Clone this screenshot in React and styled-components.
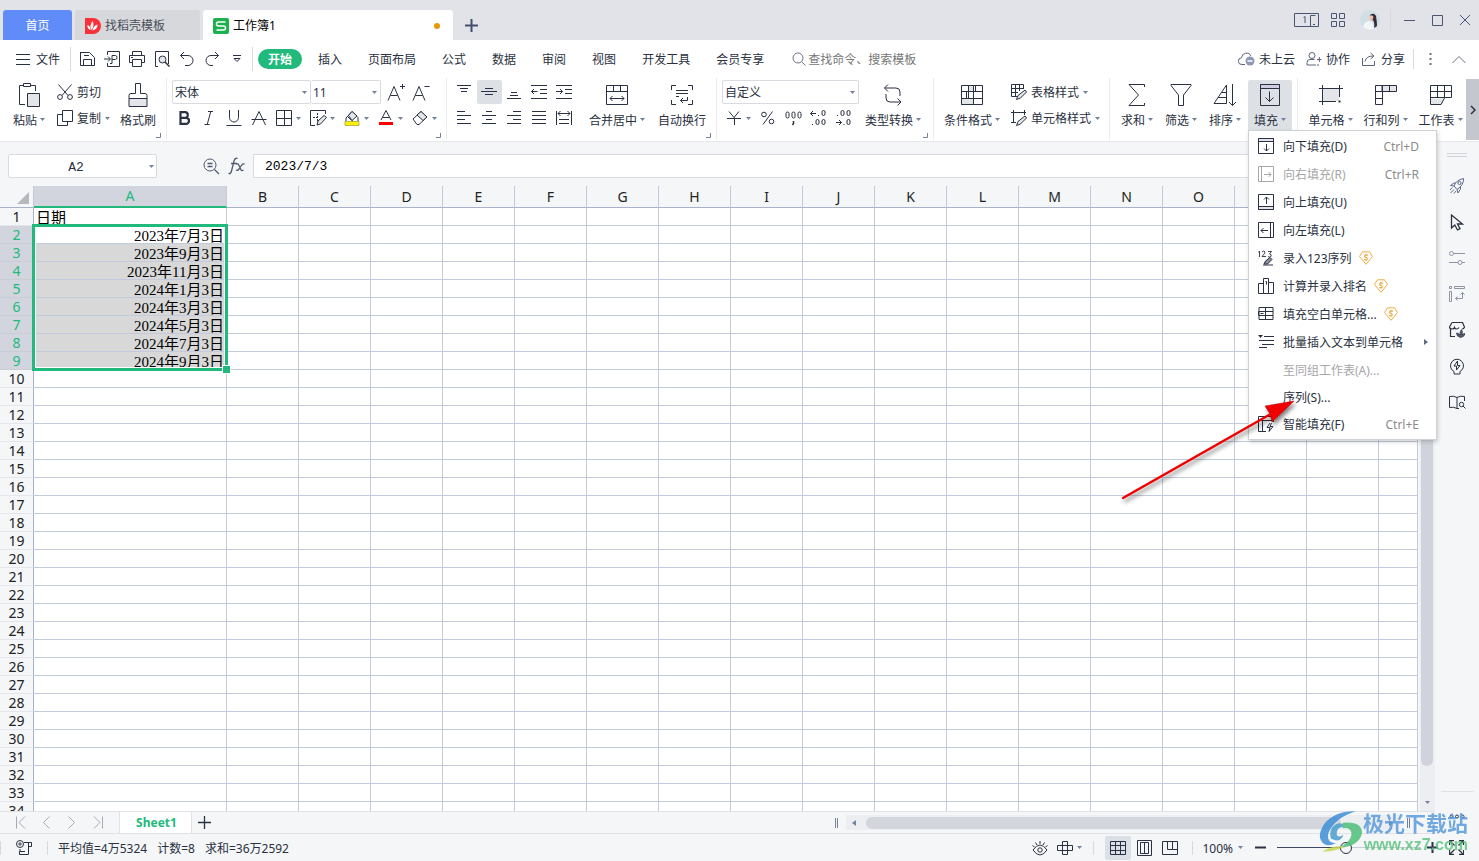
import React from 'react';
import styled, { createGlobalStyle, css } from 'styled-components';

const UI = '"Noto Sans", "Noto Sans CJK SC", sans-serif';
const CELL = '"Liberation Serif", "Noto Sans CJK SC", serif';
const INK = '#2a3142';
const GREEN = '#21b97c';
const LINE = '#c3cadb';
const PANEL = '#f5f6f8';

const Global = createGlobalStyle`
  * { box-sizing: border-box; }
  body { margin: 0; font-family: ${UI}; font-size: 12px; line-height: 16px; color: ${INK}; overflow: hidden; }
  button, input, select { font: inherit; color: inherit; margin: 0; padding: 0; border: 0; background: none; outline: none; }
  svg { display: block; flex: none; }
`;

/* ---------- icons: [width, height, drawing] ---------- */
const F = '#e3e5e9';
const icons = {
  menu: [14, 12, <path d="M0 1.500h14M0 6.500h14M0 11.500h14" />],
  save: [16, 16, <><path d="M1 1.500h9.500l5 5V14.500H1.500V1.500" /><path d="M5 4.500h5M4.500 14.500v-6h8v6" /></>],
  exportPdf: [16, 16, <><path d="M3.500 4V.500h12v15h-12V12M0 8h6M4 5.500L6.500 8 4 10.500M8 12.500V4.500h3.500q1.500 0 1.500 2t-1.500 2H8M6 12.500h2" /></>],
  print: [16, 16, <><path d="M3.500 4.500v-4h9v4M3.500 11.500h-3v-7h15v7h-3" /><path d="M3.500 8.500h9v7h-9z" /><path d="M2 6.500h2" /></>],
  preview: [16, 16, <><path d="M4 15.500H1.500V.500h13V13" /><circle cx="8.500" cy="8.500" r="3.500" fill={F} /><path d="M11 11l4.500 4.500" strokeWidth="1.500" /></>],
  undo: [16, 16, <><path d="M5 1L1.500 4.500 5 8M1.500 4.500H9a5 5 0 0 1 0 10H6" /></>],
  redo: [16, 16, <><path d="M11 1l3.500 3.500L11 8M14.500 4.500H7a5 5 0 0 0 0 10h2" /></>],
  more: [8, 8, <><path d="M0 .500h8M1 3.500L4 6.500l3-3z" /></>],
  search: [14, 14, <><circle cx="6" cy="6" r="5" /><path d="M9.500 9.500l4 4" /></>],
  cloud: [17, 16, <><path d="M7 13.500H4a3.300 3.300 0 0 1-.5-6.700A5 5 0 0 1 13 5" /><circle cx="12" cy="10" r="4.500" fill="#8d99b3" stroke="none" /><path d="M9.500 10h5" stroke="#fff" strokeWidth="1.500" /></>],
  person: [16, 14, <><circle cx="6" cy="3.500" r="3" /><path d="M8.500 7.500H4a3 3 0 0 0-3 3v2.500h9M11 7.500h4.500M13.300 5v5M11 13h2" /></>],
  share: [16, 14, <><path d="M1.500 6v7.500h12V9M4 9.500q1-5.500 8-5.500M9.500 1L13 4 9.500 7" /></>],
  dots: [3, 14, <path d="M1.500 1v2M1.500 6v2M1.500 11v2" strokeWidth="2" />],
  up: [16, 9, <path d="M1.500 8L8 1.500 14.500 8" />],
  plus: [13, 13, <path d="M6.500 0v13M0 6.500h13" strokeWidth="2" />],
  plusThin: [13, 13, <path d="M6.500 0v13M0 6.500h13" strokeWidth="1.300" />],
  deskOne: [25, 14, <><path d="M.500.500h24v13H.500z M16.500 13.500V2.500h5M19 11.500h2" /><path d="M9.500 4.500L11 3.500v6.500" /></>],
  apps: [14, 14, <path d="M.500.500h5v5h-5zM8.500.500h5v5h-5zM.500 8.500h5v5h-5zM8.500 8.500h5v5h-5z" />],
  min: [11, 11, <path d="M0 5.500h11" />],
  max: [11, 11, <path d="M.500.500h10v10H.500z" />],
  close: [12, 12, <path d="M1 1l10 10M11 1L1 11" />],
  paste: [24, 24, <><path d="M8 21.500H2.500v-19H6M14 2.500h4.500V8" /><path d="M6.500.500h7v3h-7z" /><path d="M10.500 10.500h12v13h-12z" fill={F} /></>],
  cut: [16, 16, <><path d="M1.500.500l9.500 11M14.500.500L5 11.500" /><circle cx="3" cy="13" r="2.400" /><circle cx="13" cy="13" r="2.400" /></>],
  copy: [16, 16, <><path d="M5.500.500h10v11h-10z" /><path d="M5.500 4.500H.500v11h10v-4" /></>],
  brush: [20, 24, <><path d="M1 15.500h18v8H1z" fill={F} /><path d="M1 15.500V12.500q0-2 2-2h4.500V.500h5v10H17q2 0 2 2v3" /></>],
  growA: [18, 18, <><path d="M1 17.500L7 3.500l6 14M3.500 12.500h7M13 3.500h5M15.500 1v5" /></>],
  shrinkA: [18, 18, <><path d="M1 17.500L7 3.500l6 14M3.500 12.500h7M12.500 3.500h5" /></>],
  bold: [12, 14, <path d="M2.500 1.200H7a2.800 2.800 0 0 1 0 5.600H2.500zM2.500 6.800H8a3 3 0 0 1 0 6H2.500z" strokeWidth="2.200" />],
  italic: [10, 14, <path d="M4 .500h5M.500 13.500h5M6.800.500l-3.600 13" />],
  underline: [16, 16, <path d="M3.500 0v7.500a4.500 4.500 0 0 0 9 0V0M.500 15.500h15" />],
  strike: [16, 14, <path d="M1.500 14L8 .500 14.500 14M.500 8.500h15" />],
  border: [16, 16, <path d="M.500.500h15v15H.500zM8.500.500v15M.500 8.500h15" />],
  borderDraw: [17, 16, <><path d="M5 15.500H.500V.500h15V4" /><path d="M7.500 3v8M3 7.500h6" strokeDasharray="2 1" /><path d="M7 15l1-4 6-5.500 2.500 2L10.500 14z" fill={F} /></>],
  fillColor: [16, 16, <><path d="M2 11V8L8 1.500 14 7.500V11M4 7l5 4.500" /><path d="M4.500 5.500L8 1.500l5 4.500-5 4.500z" fill={F} /><path d="M1 11.500h14v4H1z" fill="#fff200" stroke="#8a8a30" strokeWidth=".6" /></>],
  fontColor: [14, 16, <><path d="M2 10L7 .500 12 10M4 7.500h6" /><path d="M0 13.500h14" stroke="#f00" strokeWidth="3" /></>],
  eraser: [16, 16, <><path d="M1 9L9 1.500l6 5.500-8 7.500H5z" /><path d="M5 5l6 5.500 4-3.500L9 1.500z" fill={F} /></>],
  vTop: [16, 16, <path d="M1 1.500h14M4 4.500h8M5 7.500h6" />],
  vMid: [16, 16, <path d="M4 4.500h8M0 7.500h16M4 10.500h8" />],
  vBot: [16, 16, <path d="M5 8.500h6M4 11.500h8M1 14.500h14" />],
  indentL: [16, 14, <path d="M0 .500h16M9 4.500h7M9 8.500h7M0 13.500h16M0 6.500h6.500M3 4L.500 6.500 3 9" />],
  indentR: [16, 14, <path d="M0 .500h16M9 4.500h7M9 8.500h7M0 13.500h16M0 6.500h6.500M4 4l2.500 2.500L4 9" />],
  hLeft: [14, 14, <path d="M0 .500h8M0 4.500h14M0 8.500h8M0 12.500h14" />],
  hCenter: [14, 14, <path d="M4 .500h6M0 4.500h14M4 8.500h6M0 12.500h14" />],
  hRight: [14, 14, <path d="M6 .500h8M0 4.500h14M6 8.500h8M0 12.500h14" />],
  justify: [14, 14, <path d="M0 .500h14M0 4.500h14M0 8.500h14M0 12.500h14" />],
  distribute: [16, 14, <path d="M.500 0v14M15.500 0v14M3 8.500h10M3 12.500h10M2 2.500h12M4.500 0L2 2.500 4.500 5M11.500 0L14 2.500 11.500 5" />],
  merge: [22, 20, <><path d="M.500.500h21v19H.500zM.500 6.500h21M7.500.500v6M14.500.500v6M4 13.500h14M6.500 11L4 13.500l2.500 2.500M15.500 11l2.500 2.500-2.500 2.500" /></>],
  wrap: [22, 20, <><path d="M.500 5V.500H5M17 .500h4.500V5M.500 15v4.500H5M17 19.500h4.500V15M5 5.500h12M5 8.500h12M5 11.500h3M16.500 12v3.500h-7M12 13l-2.500 2.500L12 18" /></>],
  yen: [14, 14, <path d="M2 .500l5 6 5-6M0 7.500h14M7.500 6.500V14" />],
  percent: [14, 14, <><circle cx="3" cy="3.500" r="2.300" /><circle cx="10.500" cy="10.500" r="2.300" /><path d="M11.500.500L2 13.500" /></>],
  thousand: [17, 15, <><rect x="1" y="1" width="3" height="6" rx="1.500" /><rect x="7" y="1" width="3" height="6" rx="1.500" /><rect x="13" y="1" width="3" height="6" rx="1.500" /><path d="M8.500 10v2.500l-1 1.500" strokeWidth="1.500" /></>],
  decInc: [17, 16, <><path d="M.500 3.500H6M3 1L.500 3.500 3 6M8 5.500h1" /><rect x="12" y=".5" width="3" height="5" rx="1.500" /><rect x="6" y="9.500" width="3" height="5" rx="1.500" /><rect x="12" y="9.500" width="3" height="5" rx="1.500" /><path d="M2 14.500h1" /></>],
  decDec: [17, 16, <><path d="M2 5.500h1M1 12.500h5.500M4 10l2.500 2.500L4 15M8.500 14.500h1" /><rect x="6" y=".5" width="3" height="5" rx="1.500" /><rect x="12" y=".5" width="3" height="5" rx="1.500" /><rect x="12" y="9.500" width="3" height="5" rx="1.500" /></>],
  convert: [20, 22, <><path d="M5 .500L1.500 4 5 7.500M1.500 4H13q4 0 4 4v4M14.500 14.500L18 18l-3.500 3.500M18 18H7q-4 0-4-4v-4" /></>],
  condFmt: [22, 20, <><path d="M.500.500h21v19H.500z" /><path d="M7.500.500h5v6h-5zM.500 13.500h12v6H.500z" fill={F} /><path d="M.500 6.500h21M.500 13.500h21M7.500 6.500v7M5.500 6.500v7M12.500 6.500v13M14.500.500v6" /></>],
  tableStyle: [16, 16, <><path d="M6 12.500H.500v-12h12V5M.500 4.500h12M.500 8.500H7M4.500.500v12M8.500.500V7" /><path d="M5.500 15.500l1.500-4 7-5.500 1.500 2-6 6z" fill={F} /></>],
  cellStyle: [16, 16, <><path d="M2.500 0v13M0 2.500h15M13.500 0v5M0 12.500h5" /><path d="M5.500 15.500l1.500-4 7-5.500 1.500 2-6 6z" fill={F} /></>],
  sum: [20, 22, <path d="M17.500 3V.500H2L11.500 11 2 21.500h15.500V19" />],
  filter: [22, 22, <path d="M1 .500h20v1L13.500 11v10.500h-5V11L1 1.500z" />],
  sort: [24, 24, <path d="M1 20.500L13.500 2v18.500H1zM9 9.500h4.500M5 14.500h8.500M19.500 1v21.500M16 19l3.500 3.500L23 19" />],
  fill: [20, 22, <><path d="M.500.500h19v21H.500z" /><path d="M.500.500h19v4H.500z" fill="#d0cde0" /><path d="M9.500 7.500v10M5.500 13.500l4 4 4-4" /></>],
  cell: [24, 20, <><path d="M3 4h17v12H3z" fill={F} stroke="none" /><path d="M3.500 0v20M20.500 0v12M0 3.500h24M0 16.500h17" /><path d="M19.500 16.500h2" strokeWidth="2" /></>],
  rowcol: [22, 20, <><path d="M7 .500h14.500v6H7z" fill={F} /><path d="M.500.500h7v19h-7z" /><path d="M14.500.500v6M.500 6.500h7M.500 13.500h7" /></>],
  sheet: [22, 20, <><path d="M.500 13.500h14l-2 6H.500z" fill={F} stroke="none" /><path d="M.500 19.500V.500h21v12H.500M.500 6.500h21M7.500.500v12M14.500.500v12M.500 19.500H11l3.500-6.500" /></>],
  chevR: [6, 10, <path d="M1 1l4 4-4 4" strokeWidth="1.500" />],
  zoomOut: [17, 17, <><circle cx="7" cy="7" r="6" /><path d="M4.500 5.500h5M4.500 8.500h5M11.500 11.500l4.500 4.500" strokeWidth="1.300" /></>],
  fillDown: [16, 16, <><path d="M.500.500h15v3H.500z" fill={F} /><path d="M.500.500h15v15H.500zM8.500 6v7M6 10.500l2.500 2.500 2.500-2.500" /></>],
  fillRight: [16, 16, <><path d="M.500.500h15v15H.500zM3.500.500v15M6 8.500h7M10.500 6l2.500 2.500-2.500 2.500" /></>],
  fillUp: [16, 16, <><path d="M.500 12.500h15v3H.500z" fill={F} /><path d="M.500.500h15v15H.500zM8.500 10V3M6 5.500L8.500 3 11 5.500" /></>],
  fillLeft: [16, 16, <><path d="M.500.500h15v15H.500zM12.500.500v15M10 8.500H3M5.500 6L3 8.500 5.500 11" /></>],
  seq: [16, 16, <><path d="M0 2.500L1.500 1v6M4 2q2-2 3 0 0 1.500-3 4.500h4M10 1.500h3.500L11.500 4q2.500.5 1.500 2.500-1 1-3 .2" strokeWidth=".9" /><path d="M6 14l1.500-3 4.500-3.500 2 2L9.500 14z" fill="#8a8f9c" /><path d="M5 15h10" /></>],
  rank: [16, 16, <><path d="M.500 5.500h5v10h-5zM5.500.500h5v15h-5zM10.500 4.500h5v11h-5z" /><path d="M7.500 3.500h1v3" /></>],
  blank: [16, 14, <><path d="M1 .500h14v12H1z" /><path d="M.500 4.500h7v4h-7zM7.500.500v12M7.500 4.500H15M7.500 8.500H15M2.500 6.500h3" /></>],
  batch: [16, 14, <><path d="M0 0h5L2.500 3z" fill="currentColor" stroke="none" /><path d="M6 1.500h10M1 5.500h15M4 9.500h12M1 12.500h8" /></>],
  smart: [16, 16, <><path d="M8 15.500H.500V.500h15V6M.500 4.500h15M4.500 4.500v11" /><path d="M12 7l-3 4.500h3l-1 4 4-5h-3l1.500-3.500" /></>],
  coin: [14, 14, <><path d="M3.500.800h7l3 4.700L7 13.300.500 5.500z" /><path d="M9 4.200H6.200q-1.400 1.300.2 2.200h1q1.600 1 .2 2.300H5.200M7 3v1M7 8.800v1" strokeWidth="1.200" /></>],
  right: [4, 6, <path d="M0 0l4 3-4 3z" fill="currentColor" stroke="none" />],
  left: [4, 6, <path d="M4 0L0 3l4 3z" fill="currentColor" stroke="none" />],
  rocket: [16, 16, <><path d="M5 8q2-6 9.500-7.500Q15 7 8 11.500zM5 8L1.500 7.500 5 5h2M8 11.500L9 15l2.500-4V9M3.500 9.500L1 12M5 11.500L1.500 15M7 13l-2 2.500" /><circle cx="10.500" cy="5" r="1.600" /></>],
  cursor: [14, 17, <path d="M1.500 1v13l3.300-3 2.700 5 2.500-1.300L7.500 10h5z" strokeWidth="1.300" />],
  sliders: [16, 14, <><circle cx="2.500" cy="2.500" r="2" /><path d="M4.500 2.500H16M0 11.500h9M13 11.500h3" /><circle cx="11" cy="11.500" r="2" /></>],
  panes: [16, 16, <><path d="M.500.500h2v2h-2zM5.500.500h10v2h-10zM.500 5.500h2v10h-2zM13.500 6.500v6H6.500M11.500 8.500l2-2 2 2M8.500 10.500l-2 2 2 2" /></>],
  shop: [16, 16, <><path d="M3 .500h10.500l2 4.500q-.5 2-2.500 2M3 .500L.500 5q0 2 2.500 2 2 0 2.500-1.500Q6 7 7.500 7T10 5.500M1.500 7v7.500H6" strokeWidth="1.200" /><path d="M11.500 15.500q-4-1-4-4.500 2.500 0 3.500 2-.5-3 1.500-5.500 1.500 2 .5 5.500 1-1.500 3-1.500-.5 3.500-4.500 4z" fill="#555c6b" strokeWidth=".7" /></>],
  bulb: [16, 17, <><path d="M5 13.500a6.500 6.500 0 1 1 6 0M5 16h6M5 13.500V16M11 13.500V16" /><path d="M8.500 3L5 8h2.500v4L11 7.500H8.500z" /></>],
  book: [17, 14, <><path d="M8 13.500q-3-2-7.500-1V1.500Q5 .500 8 2.500q3-2 7.500-1V6M8 2.500v11h2" /><circle cx="12.500" cy="9.500" r="2.200" /><path d="M14 11l2.500 2.500" /></>],
  trio: [16, 5, <><circle cx="2.500" cy="2.500" r="1.500" /><circle cx="8" cy="2.500" r="1.500" /><circle cx="13.500" cy="2.500" r="1.500" /></>],
  first: [11, 13, <path d="M1.500.500v12M10 .500l-6 6 6 6" />],
  prev: [8, 13, <path d="M7.500.500l-6 6 6 6" />],
  next: [8, 13, <path d="M.500.500l6 6-6 6" />],
  last: [11, 13, <path d="M1 .500l6 6-6 6M9.500.500v12" />],
  grip: [3, 10, <path d="M.500 0v10M2.500 0v10" />],
  script: [17, 16, <><circle cx="4" cy="4" r="3.500" /><circle cx="4" cy="4" r="1.200" /><path d="M8 2.500h7.500v4h-3M12.500 2.500v12M4 9v2.500M3.500 11.500v3h9M3.500 11.500H9" /></>],
  eye: [16, 16, <><circle cx="8" cy="10" r="2.200" /><path d="M1 10q7-10 14 0-7 10-14 0zM8 1v3M3.500 2.500L5 5M12.500 2.500L11 5M.500 5.500L2.500 7M15.500 5.500L13.500 7" /></>],
  cross: [16, 14, <path d="M5.500.500h5v13h-5zM.500 4.500h15v5H.500z" />],
  gridView: [16, 14, <path d="M.500.500h15v13H.500zM.500 4.500h15M.500 9.500h15M5.500.500v13M10.500.500v13" />],
  pageView: [15, 16, <path d="M.500.500h14v15H.500zM3.500 2.500h8v11h-8zM7.500 2.500v11" />],
  breakView: [16, 14, <path d="M.500.500h15v13H.500zM5.500.500v8h5v-8M10.500 8.500h5" />],
  minus: [11, 11, <path d="M0 5.500h11" strokeWidth="2" />],
  zoomPlus: [11, 11, <path d="M0 5.500h11M5.500 0v11" strokeWidth="2" />],
  full: [15, 15, <path d="M.500 5V.500H5M10 .500h4.500V5M.500 10v4.500H5M10 14.500h4.500V10M1 1l4.500 4.500M14 1L9.500 5.500M1 14l4.500-4.500M14 14L9.500 9.500" strokeWidth="1.300" />],
  corner: [5, 5, <path d="M4.500 0v4.500H0" />],
};

const Icon = ({ name, color }) => {
  const [w, h, art] = icons[name];
  return (
    <svg width={w} height={h} viewBox={`0 0 ${w} ${h}`} fill="none" stroke={color || 'currentColor'} aria-hidden="true">
      {art}
    </svg>
  );
};
const Caret = () => (
  <svg width="5" height="3" viewBox="0 0 5 3" fill="#75819b" aria-hidden="true"><path d="M0 0h5L2.500 3z" /></svg>
);

/* ---------- frame ---------- */
const Page = styled.div`
  height: 100vh; display: flex; flex-direction: column; position: relative; background: #fff; overflow: hidden;
`;
const Text = styled.span`padding-top: 2px; white-space: nowrap;`;
const TitleBar = styled.header`
  height: 40px; flex: none; display: flex; align-items: flex-end; gap: 3px; padding-left: 3px; background: #e1e3e8;
`;
const DocTab = styled.button`
  height: 30px; width: ${p => p.$w}px; display: flex; align-items: center; gap: 4px; padding: 2px 13px 0 10px;
  border-radius: 3px 3px 0 0; text-align: left; background: ${p => p.$bg}; color: ${p => p.$fg};
  ${p => p.$center && css`justify-content: center; padding: 2px 0 0;`}
`;
const Dirty = styled.span`width: 6px; height: 6px; border-radius: 50%; background: #e5990b; margin-left: auto;`;
const NewTab = styled.button`width: 30px; height: 30px; display: grid; place-items: center; color: #44506b;`;
const WindowTools = styled.div`
  margin-left: auto; height: 40px; display: flex; align-items: center; color: #4a5672;
`;
const WinButton = styled.button`width: ${p => p.$w || 28}px; height: 40px; display: grid; place-items: center;`;
const Rule = styled.span`
  width: 1px; height: ${p => p.$h || 20}px; background: #d8dae0; margin: 0 ${p => p.$m || 0}px; flex: none;
`;

/* ---------- menu bar ---------- */
const MenuBar = styled.nav`height: 38px; flex: none; display: flex; align-items: center; background: #fff; padding-left: 8px;`;
const FileButton = styled.button`display: flex; align-items: center; gap: 6px; height: 24px; padding: 0 10px 0 8px;`;
const ToolButton = styled.button`
  width: ${p => (p.$menu ? 34 : 25)}px; height: 24px; display: flex; align-items: center; flex: none;
  border-radius: 2px; background: ${p => (p.$on ? '#dde1e6' : 'none')};
`;
const ToolIcon = styled.span`width: 24px; display: grid; place-items: center;`;
const QuickTools = styled.div`display: flex; padding: 0 2px 0 4px;`;
const Tabs = styled.div`display: flex; gap: 6px; padding-left: 5px;`;
const Tab = styled.button`
  height: 20px; padding: 2px 10px 0; border-radius: 10px; white-space: nowrap;
  ${p => p.$on && css`background: ${GREEN}; color: #fff; font-weight: 700;`}
`;
const Search = styled.label`
  display: flex; align-items: center; gap: 2px; margin-left: 18px; color: #6e7788;
  input { width: 160px; padding-top: 2px; }
  input::placeholder { color: #777; opacity: 1; }
`;
const Account = styled.div`margin-left: auto; display: flex; align-items: center; gap: 11px;`;
const AccountButton = styled.button`display: flex; align-items: center; gap: 4px; white-space: nowrap;
  svg { color: #5a6478; }
`;
const BarEnd = styled.button`width: ${p => p.$w}px; height: 24px; display: grid; place-items: center; color: #6b7484;`;

/* ---------- ribbon ---------- */
const Ribbon = styled.section`
  height: 64px; flex: none; display: flex; background: #fff; border-bottom: 1px solid #e6e7ea; position: relative; z-index: 2;
`;
const Group = styled.div`
  width: ${p => p.$w}px; flex: none; display: flex; align-items: flex-start; padding: 2px 0 0 5px; position: relative;
  border-right: 1px solid ${p => (p.$last ? 'transparent' : '#ececef')}; height: 62px;
`;
const Launcher = styled.button`position: absolute; right: 5px; bottom: 2px; color: #75819b;`;
const BigButton = styled.button`
  width: ${p => p.$w}px; height: 50px; flex: none; border-radius: 2px 2px 0 0; background: ${p => (p.$on ? '#dde1e6' : 'none')};
  display: flex; flex-direction: column; align-items: center;
`;
const BigIcon = styled.span`height: 30px; display: grid; place-items: center;`;
const Label = styled.span`height: 20px; display: flex; align-items: center; gap: 3px; white-space: nowrap; padding-bottom: 1px;`;
const Stack = styled.div`display: flex; flex-direction: column; gap: 2px; flex: none; width: ${p => p.$w}px;`;
const Row = styled.div`display: flex; align-items: center; height: 24px;`;
const RowButton = styled.button`
  display: flex; align-items: center; gap: 4px; height: 24px; padding-left: ${p => p.$pad || 6}px; white-space: nowrap;
`;
const SelectBox = styled.div`
  position: relative; width: ${p => p.$w}px; height: 24px; border: 1px solid #d9dbe0; border-radius: 2px; background: #fff;
  & + & { border-left: 0; margin-right: 3px; }
  select { appearance: none; width: 100%; height: 22px; padding: 2px 0 0 2px; }
  svg { position: absolute; right: 3px; top: 10px; pointer-events: none; }
`;
const RibbonScroll = styled.button`
  width: 13px; height: 61px; margin: 1px 0 0 auto; background: #c5c7cf; display: grid; place-items: center; flex: none; z-index: 1;
`;
const MenuAnchor = styled.div`position: relative; margin-left: 1px;`;
const Menu = styled.ul`
  position: absolute; left: 0; top: 50px; width: 189px; margin: 0; padding: 1px 0 2px; list-style: none; background: #fff;
  border: 1px solid #cfd1d6; box-shadow: 1px 2px 4px rgba(0, 0, 0, .18); z-index: 2;
`;
const MenuItem = styled.button`
  width: 100%; height: ${p => (p.$short ? 27 : 28)}px; display: flex; align-items: center; padding: 0 17px 0 9px; white-space: nowrap;
  text-align: left; color: ${p => (p.$off ? '#a6a6a6' : INK)};
`;
const MenuIcon = styled.span`width: 25px; flex: none;`;
const MenuText = styled(Text)`margin-right: 7px;`;
const Shortcut = styled.kbd`font: inherit; margin-left: auto; padding-top: 2px; color: #8b8b8b;`;
const SubArrow = styled.span`position: absolute; right: 8px; color: #5f6b85;`;
const Pointer = styled.svg`position: absolute; left: -132px; top: 262px; pointer-events: none; overflow: visible;`;

/* ---------- work area ---------- */
const Work = styled.div`flex: 1; min-height: 0; display: flex;`;
const Main = styled.main`flex: 1; min-width: 0; display: flex; flex-direction: column;`;
const FormulaBar = styled.div`
  height: 44px; flex: none; display: flex; align-items: center; background: ${PANEL}; padding: 4px 0 0 8px;
`;
const NameBox = styled.div`
  width: 149px; height: 24px; border: 1px solid #d9dbe0; border-radius: 2px; background: #fff; display: flex; align-items: center;
  margin-right: 41px; padding-right: 2px;
  input { flex: 1; min-width: 0; height: 22px; padding: 2px 6px 0 0; text-align: center; font: 13px/20px "Liberation Mono", monospace; }
`;
const FxButton = styled.button`
  width: 26px; height: 24px; display: grid; place-items: center; color: #4f5a70;
`;
const FormulaInput = styled.input`
  flex: 1; min-width: 0; height: 24px; margin-left: 3px; border: 1px solid #d9dbe0; border-right: 0; background: #fff;
  padding-left: 11px; font: 13px/22px "Liberation Mono", monospace; color: #000;
`;
const SheetArea = styled.div`flex: 1; min-height: 0; display: flex;`;
const GridView = styled.div`flex: 1; min-width: 0; overflow: hidden; background: #fff;`;
const Table = styled.table`
  width: 100%; table-layout: fixed; border-collapse: separate; border-spacing: 0; font-size: 14px;
`;
const ColHead = styled.th`
  height: 22px; padding: 0; font-weight: 400; line-height: 18px; color: ${p => (p.$on ? GREEN : '#222')};
  background: ${p => (p.$on ? '#d2d5dd' : PANEL)}; border-right: 1px solid ${LINE};
  border-bottom: ${p => (p.$on ? `2px solid ${GREEN}` : '1px solid #a9b2c9')};
`;
const SelectAll = styled(ColHead)`
  padding: 3px 4px 0 0;
  svg { margin-left: auto; }
`;
const RowHead = styled.th`
  height: 18px; padding: 0; font-weight: 400; line-height: 16px; color: ${p => (p.$on ? GREEN : '#222')};
  background: ${p => (p.$on ? '#d2d5dd' : PANEL)}; border-right: 1px solid #a9b2c9; border-bottom: 1px solid ${p => (p.$on ? '#c9cdd6' : '#e3e6ec')};
`;
const Cell = styled.td`
  height: 18px; padding: 0 2px; border-right: 1px solid ${LINE}; border-bottom: 1px solid ${LINE}; position: relative;
  font-family: ${CELL}; font-size: 15px; color: #000; white-space: nowrap; text-align: ${p => (p.$num ? 'right' : 'left')};
  background: ${p => (p.$sel ? '#d8d8d8' : 'transparent')};
`;
const CellText = styled.span`display: block; height: 17px; line-height: 20px;`;
const Selection = styled.span`
  position: absolute; z-index: 1; left: -2px; top: -2px; width: calc(100% + 4px); height: 147px; border: 3px solid ${GREEN};
  box-shadow: inset 0 0 0 1px #fff; pointer-events: none;
  &::after { content: ''; position: absolute; right: -6px; bottom: -6px; width: 7px; height: 7px; background: ${GREEN}; border: 1px solid #fff; }
`;
const VScroll = styled.div`
  width: 16px; flex: none; background: #eceef2; border-left: 2px solid ${PANEL}; display: flex; flex-direction: column; align-items: center;
  padding: 22px 0 7px;
`;
const VThumb = styled.span`width: 12px; flex: 1; margin-bottom: 35px; border-radius: 6px; background: #d0d3db;`;
const SideBar = styled.aside`
  width: 45px; flex: none; background: ${PANEL}; border-left: 1px solid #eceef1; display: flex; flex-direction: column; align-items: center;
  padding-top: 11px;
`;
const SideGrip = styled.span`width: 20px; height: 4px; border: solid #cfd2d8; border-width: 1px 0; margin-bottom: 11px;`;
const SideButton = styled.button`width: 36px; height: 36px; display: grid; place-items: center; color: ${p => p.$c || INK};`;
const SideFoot = styled.div`
  margin-top: auto; width: 32px; height: 43px; border-top: 1px solid #dfe1e6; display: grid; place-items: center; padding-top: 6px;
`;
const SheetBar = styled.div`
  height: 23px; flex: none; display: flex; align-items: center; background: ${PANEL}; border-top: 1px solid #e0e2e7; border-bottom: 1px solid #e0e2e7;
  padding-left: 7px;
`;
const NavButton = styled.button`width: 26px; height: 21px; display: grid; place-items: center; color: #a3a9b5;`;
const SheetTab = styled.button`
  width: 73px; height: 21px; margin-left: 8px; padding: 1px 0 0 2px; background: #fff; border: solid #e0e2e7; border-width: 0 1px;
  color: ${GREEN}; font-weight: 700;
`;
const AddSheet = styled.button`width: 24px; height: 21px; display: grid; place-items: center;`;
const HScroll = styled.div`
  width: 42%; margin-left: auto; display: flex; align-items: center; gap: 8px; color: #75819b; padding-right: 24px;
`;
const HTrack = styled.div`
  flex: 1; height: 15px; display: flex; align-items: center; gap: 10px; background: #eceef2; padding: 0 6px; color: #6f83a5;
`;
const HThumb = styled.span`flex: 1; height: 12px; margin-right: 38px; border-radius: 6px; background: #d3d6dd;`;
const StatusBar = styled.footer`height: 27px; flex: none; display: flex; align-items: center; background: ${PANEL};`;
const Stats = styled.div`display: flex; gap: 10px; padding-left: 10px;`;
const ViewTools = styled.div`margin-left: auto; display: flex; align-items: center; padding-right: 10px;`;
const ViewButton = styled.button`
  width: ${p => p.$w || 26}px; height: 24px; display: flex; align-items: center; justify-content: center; gap: 4px;
  background: ${p => (p.$on ? '#dbdfe6' : 'none')}; border-radius: 2px;
`;
const ZoomButton = styled.button`display: flex; align-items: center; gap: 5px; margin-right: 4px;`;
const ZoomRange = styled.input`
  appearance: none; width: 144px; height: 14px; margin: 0 0 0 4px;
  background: linear-gradient(to right, #3f4a5f 48%, #c9ccd3 48%) center / 100% 1px no-repeat;
  &::-webkit-slider-thumb { appearance: none; width: 12px; height: 12px; border-radius: 50%; border: 1px solid ${INK}; background: ${PANEL}; }
`;
const Brand = styled.div`
  position: absolute; right: 11px; bottom: 7px; z-index: 3; display: flex; pointer-events: none; opacity: .85;
`;
const BrandText = styled.div`display: flex; flex-direction: column; align-items: flex-end;`;
const BrandName = styled.span`font-size: 21px; line-height: 26px; font-weight: 700; color: #5b9bdb; white-space: nowrap;`;
const BrandUrl = styled.span`font: 700 16px/18px "Liberation Sans", sans-serif; color: #62c583; white-space: nowrap;`;

/* ---------- data ---------- */
const columns = 'ABCDEFGHIJKLMNOPQR'.split('');
const rows = Array.from({ length: 34 }, (_, i) => i + 1);
const colA = {
  1: '日期', 2: '2023年7月3日', 3: '2023年9月3日', 4: '2023年11月3日', 5: '2024年1月3日',
  6: '2024年3月3日', 7: '2024年5月3日', 8: '2024年7月3日', 9: '2024年9月3日',
};
const inRange = r => r >= 2 && r <= 9;
const quick = [['save', '保存'], ['exportPdf', '输出为PDF'], ['print', '打印'], ['preview', '打印预览'], ['undo', '撤销'], ['redo', '恢复'], ['more', '更多']];
const tabs = ['开始', '插入', '页面布局', '公式', '数据', '审阅', '视图', '开发工具', '会员专享'];
const fillMenu = [
  { icon: 'fillDown', text: '向下填充(D)', key: 'Ctrl+D' },
  { icon: 'fillRight', text: '向右填充(R)', key: 'Ctrl+R', off: true },
  { icon: 'fillUp', text: '向上填充(U)' },
  { icon: 'fillLeft', text: '向左填充(L)' },
  { icon: 'seq', text: '录入123序列', coin: true },
  { icon: 'rank', text: '计算并录入排名', coin: true },
  { icon: 'blank', text: '填充空白单元格...', coin: true },
  { icon: 'batch', text: '批量插入文本到单元格', sub: true },
  { text: '至同组工作表(A)...', off: true, short: true },
  { text: '序列(S)...', short: true },
  { icon: 'smart', text: '智能填充(F)', key: 'Ctrl+E', short: true },
];
const side = [['rocket', '#5b6b8c'], ['cursor'], ['sliders', '#8e96a5'], ['panes', '#8e96a5'], ['shop'], ['bulb'], ['book']];

const Tool = ({ icon, label, menu, on }) => (
  <ToolButton $menu={menu} $on={on} aria-label={label || icon}>
    <ToolIcon><Icon name={icon} /></ToolIcon>{menu && <Caret />}
  </ToolButton>
);
const Big = ({ icon, text, w, caret = true, on }) => (
  <BigButton $w={w} $on={on}>
    <BigIcon><Icon name={icon} /></BigIcon>
    <Label><Text>{text}</Text>{caret && <Caret />}</Label>
  </BigButton>
);
const Select = ({ w, value, label }) => (
  <SelectBox $w={w}>
    <select aria-label={label} defaultValue={value}><option>{value}</option></select>
    <Caret />
  </SelectBox>
);
const Launch = () => <Launcher aria-label="更多设置"><Icon name="corner" /></Launcher>;

function FillMenu() {
  return (
    <Menu>
      {fillMenu.map(m => (
        <li key={m.text}>
          <MenuItem $off={m.off} $short={m.short} disabled={m.off}>
            <MenuIcon>{m.icon && <Icon name={m.icon} />}</MenuIcon>
            <MenuText>{m.text}</MenuText>
            {m.coin && <Icon name="coin" color="#f0ab45" />}
            {m.key && <Shortcut>{m.key}</Shortcut>}
            {m.sub && <SubArrow><Icon name="right" /></SubArrow>}
          </MenuItem>
        </li>
      ))}
      <Pointer width="180" height="112" viewBox="0 0 180 112" aria-hidden="true">
        <g style={{ filter: 'drop-shadow(2px 3px 2px rgba(0,0,0,.5))' }}>
          <path d="M6 105L152 22" stroke="#f00000" strokeWidth="2.500" strokeLinecap="round" />
          <path d="M177 8L148 13l5 8 2 8z" fill="#f00000" stroke="#b00" strokeWidth=".5" />
        </g>
      </Pointer>
    </Menu>
  );
}

export default function App() {
  return (
    <Page>
      <Global />
      <TitleBar>
        <DocTab $w={69} $bg="#5f8cf8" $fg="#fff" $center>首页</DocTab>
        <DocTab $w={125} $bg="#d6d8dc" $fg="#4a4f5a">
          <svg width="16" height="16" viewBox="0 0 16 16" aria-hidden="true">
            <path d="M0 0h8a8 8 0 0 1 0 16H0z" fill="#f8303a" />
            <path d="M6.500 12Q4 8 7.500 3q2.500 4-1 9zM5.500 12Q2 10.500 2.500 7q3 1 3 5zM7.500 12.500Q8 8 12.500 6.500q0 5-5 6z" fill="#fff" />
          </svg>
          找稻壳模板
        </DocTab>
        <DocTab $w={250} $bg="#fff" $fg="#000">
          <svg width="16" height="16" viewBox="0 0 16 16" aria-hidden="true">
            <rect width="16" height="16" rx="2" fill="#1cb14c" />
            <path d="M12.500 4H5.500q-2 0-2 2t2 2h5q2 0 2 2t-2 2h-7" fill="none" stroke="#fff" strokeWidth="1.500" />
          </svg>
          工作簿1<Dirty />
        </DocTab>
        <NewTab aria-label="新建"><Icon name="plus" /></NewTab>
        <WindowTools>
          <WinButton $w={32} aria-label="窗口"><Icon name="deskOne" /></WinButton>
          <WinButton $w={32} aria-label="应用"><Icon name="apps" /></WinButton>
          <WinButton $w={32} aria-label="账号">
            <svg width="20" height="20" viewBox="0 0 20 20" aria-hidden="true">
              <circle cx="10" cy="10" r="10" fill="#cfdfe4" />
              <path d="M3 17q1-6 6-6l3 1 2 7q-6 2-11-2z" fill="#f2f6f7" />
              <path d="M10 5q4-3 6 1 1 6 1 10l-3 2q1-5-1-8-2 1-3-1z" fill="#33293a" />
              <path d="M9.500 6q3-2 4 1l-1 3q-3 1-3-1z" fill="#eebfae" />
            </svg>
          </WinButton>
          <Rule $m={4} />
          <WinButton aria-label="最小化"><Icon name="min" /></WinButton>
          <WinButton aria-label="最大化"><Icon name="max" /></WinButton>
          <WinButton aria-label="关闭"><Icon name="close" /></WinButton>
        </WindowTools>
      </TitleBar>

      <MenuBar>
        <FileButton><Icon name="menu" /><Text>文件</Text></FileButton>
        <Rule $h={24} />
        <QuickTools>{quick.map(([i, l]) => <Tool key={i} icon={i} label={l} />)}</QuickTools>
        <Rule $h={24} />
        <Tabs>{tabs.map((t, i) => <Tab key={t} $on={i === 0}>{t}</Tab>)}</Tabs>
        <Search><Icon name="search" /><input placeholder="查找命令、搜索模板" aria-label="查找命令" /></Search>
        <Account>
          <AccountButton><Icon name="cloud" /><Text>未上云</Text></AccountButton>
          <AccountButton><Icon name="person" /><Text>协作</Text></AccountButton>
          <AccountButton><Icon name="share" /><Text>分享</Text></AccountButton>
        </Account>
        <Rule $h={20} $m={8} />
        <BarEnd $w={16} aria-label="更多"><Icon name="dots" /></BarEnd>
        <BarEnd $w={41} aria-label="收起功能区"><Icon name="up" /></BarEnd>
      </MenuBar>

      <Ribbon>
        <Group $w={167}>
          <Big icon="paste" text="粘贴" w={48} />
          <Stack $w={62}>
            <RowButton $pad={4}><Icon name="cut" /><Text>剪切</Text></RowButton>
            <RowButton $pad={4}><Icon name="copy" /><Text>复制</Text><Caret /></RowButton>
          </Stack>
          <Big icon="brush" text="格式刷" w={46} caret={false} />
          <Launch />
        </Group>
        <Group $w={280}>
          <Stack $w={270}>
            <Row>
              <Select w={139} value="宋体" label="字体" />
              <Select w={70} value="11" label="字号" />
              <Tool icon="growA" label="增大字号" /><Tool icon="shrinkA" label="减小字号" />
            </Row>
            <Row>
              <Tool icon="bold" /><Tool icon="italic" /><Tool icon="underline" /><Tool icon="strike" />
              <Tool icon="border" menu /><Tool icon="borderDraw" menu /><Tool icon="fillColor" menu />
              <Tool icon="fontColor" menu /><Tool icon="eraser" menu />
            </Row>
          </Stack>
          <Launch />
        </Group>
        <Group $w={270}>
          <Stack $w={125}>
            <Row>
              <Tool icon="vTop" /><Tool icon="vMid" on /><Tool icon="vBot" /><Tool icon="indentL" /><Tool icon="indentR" />
            </Row>
            <Row>
              <Tool icon="hLeft" /><Tool icon="hCenter" /><Tool icon="hRight" /><Tool icon="justify" /><Tool icon="distribute" />
            </Row>
          </Stack>
          <Big icon="merge" text="合并居中" w={80} />
          <Big icon="wrap" text="自动换行" w={50} caret={false} />
          <Launch />
        </Group>
        <Group $w={217}>
          <Stack $w={137}>
            <Select w={137} value="自定义" label="数字格式" />
            <Row>
              <Tool icon="yen" menu /><Tool icon="percent" /><Tool icon="thousand" /><Tool icon="decInc" /><Tool icon="decDec" />
            </Row>
          </Stack>
          <Big icon="convert" text="类型转换" w={68} />
          <Launch />
        </Group>
        <Group $w={176}>
          <Big icon="condFmt" text="条件格式" w={66} />
          <Stack $w={100}>
            <RowButton><Icon name="tableStyle" /><Text>表格样式</Text><Caret /></RowButton>
            <RowButton><Icon name="cellStyle" /><Text>单元格样式</Text><Caret /></RowButton>
          </Stack>
        </Group>
        <Group $w={188}>
          <Big icon="sum" text="求和" w={44} />
          <Big icon="filter" text="筛选" w={44} />
          <Big icon="sort" text="排序" w={44} />
          <MenuAnchor>
            <Big icon="fill" text="填充" w={44} on />
            <FillMenu />
          </MenuAnchor>
        </Group>
        <Group $w={168} $last>
          <Big icon="cell" text="单元格" w={55} />
          <Big icon="rowcol" text="行和列" w={55} />
          <Big icon="sheet" text="工作表" w={55} />
        </Group>
        <RibbonScroll aria-label="向右滚动"><Icon name="chevR" /></RibbonScroll>
      </Ribbon>

      <Work>
        <Main>
          <FormulaBar>
            <NameBox><input defaultValue="A2" aria-label="名称框" /><Caret /></NameBox>
            <FxButton aria-label="搜索"><Icon name="zoomOut" /></FxButton>
            <FxButton aria-label="插入函数">
              <svg width="18" height="18" viewBox="0 0 18 18" fill="none" stroke="currentColor" strokeWidth="1.300" aria-hidden="true">
                <path d="M9.500 1.500Q7 .500 6 4L3.500 14q-.7 3-3 2.500M3 6.500h6M8.500 7.500q1.500-1.500 2.300.5l2 4.500q.8 2 2.700.5M16.500 7q-2-.5-3.500 2l-2 3q-1.500 2-3 1" />
              </svg>
            </FxButton>
            <FormulaInput defaultValue="2023/7/3" aria-label="编辑栏" />
          </FormulaBar>
          <SheetArea>
            <GridView>
              <Table>
                <colgroup>
                  <col width="34" /><col width="193" />
                  {columns.slice(1, -1).map(c => <col key={c} width="72" />)}
                  <col />
                </colgroup>
                <thead>
                  <tr>
                    <SelectAll aria-label="全选">
                      <svg width="12" height="12" viewBox="0 0 12 12" aria-hidden="true"><path d="M12 0v12H0z" fill="#b6b8bd" /></svg>
                    </SelectAll>
                    {columns.map(c => <ColHead key={c} scope="col" $on={c === 'A'}>{c}</ColHead>)}
                  </tr>
                </thead>
                <tbody>
                  {rows.map(r => (
                    <tr key={r}>
                      <RowHead scope="row" $on={inRange(r)}>{r}</RowHead>
                      <Cell $num={r > 1} $sel={inRange(r) && r > 2}>
                        {colA[r] && <CellText>{colA[r]}</CellText>}
                        {r === 2 && <Selection />}
                      </Cell>
                      {columns.slice(1).map(c => <Cell key={c} />)}
                    </tr>
                  ))}
                </tbody>
              </Table>
            </GridView>
            <VScroll><VThumb /><Caret /></VScroll>
          </SheetArea>
          <SheetBar>
            {['first', 'prev', 'next', 'last'].map(n => <NavButton key={n} aria-label={n}><Icon name={n} /></NavButton>)}
            <SheetTab>Sheet1</SheetTab>
            <AddSheet aria-label="新建工作表"><Icon name="plusThin" /></AddSheet>
            <HScroll>
              <Icon name="grip" />
              <HTrack><Icon name="left" /><HThumb /><Icon name="right" /></HTrack>
              <Icon name="grip" />
            </HScroll>
          </SheetBar>
        </Main>
        <SideBar>
          <SideGrip />
          {side.map(([n, c]) => <SideButton key={n} $c={c} aria-label={n}><Icon name={n} /></SideButton>)}
          <SideFoot><Icon name="trio" /></SideFoot>
        </SideBar>
      </Work>

      <StatusBar>
        <Rule $h={14} />
        <ViewButton $w={46} aria-label="宏"><Icon name="script" /></ViewButton>
        <Rule $h={14} />
        <Stats><Text>平均值=4万5324</Text><Text>计数=8</Text><Text>求和=36万2592</Text></Stats>
        <ViewTools>
          <ViewButton $w={32} aria-label="护眼模式"><Icon name="eye" /></ViewButton>
          <ViewButton aria-label="阅读模式"><Icon name="cross" /><Caret /></ViewButton>
          <Rule $m={11} $h={14} />
          <ViewButton $on aria-label="普通视图"><Icon name="gridView" /></ViewButton>
          <ViewButton aria-label="页面布局"><Icon name="pageView" /></ViewButton>
          <ViewButton aria-label="分页预览"><Icon name="breakView" /></ViewButton>
          <Rule $m={9} $h={14} />
          <ZoomButton><Text>100%</Text><Caret /></ZoomButton>
          <ViewButton aria-label="缩小"><Icon name="minus" /></ViewButton>
          <ZoomRange type="range" min="0" max="100" defaultValue="48" aria-label="缩放" />
          <ViewButton $w={22} aria-label="放大"><Icon name="zoomPlus" /></ViewButton>
          <ViewButton aria-label="全屏"><Icon name="full" /></ViewButton>
        </ViewTools>
      </StatusBar>

      <Brand>
        <svg width="44" height="42" viewBox="10 10 130 125" aria-hidden="true">
          <path d="M118 14Q60 12 26 50-2 92 26 112q14 8 34-4-30 2-22-30Q55 35 118 14z" fill="#3f8fd6" />
          <path d="M45 95Q36 62 66 50q16-2 20 10-24 0-24 22 4 12 20 2-8 26-37 11z" fill="#4a9fd0" />
          <path d="M80 48q56-6 58 30-8 42-76 46 46-18 44-46-4-18-26-14z" fill="#4fbf7a" />
          <path d="M18 134q28-18 66-16-20 16-66 16z" fill="#c8d850" />
        </svg>
        <BrandText><BrandName>极光下载站</BrandName><BrandUrl>www.xz7.com</BrandUrl></BrandText>
      </Brand>
    </Page>
  );
}
